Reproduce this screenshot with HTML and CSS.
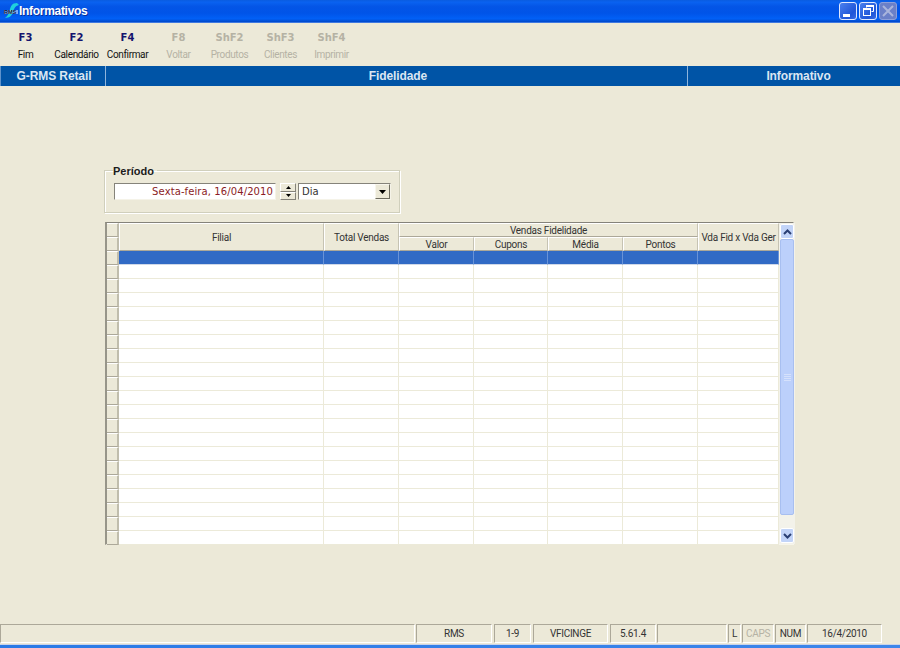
FILE: index.html
```html
<!DOCTYPE html>
<html lang="pt">
<head>
<meta charset="utf-8">
<title>Informativos</title>
<link rel="stylesheet" href="styles.css">
</head>
<body>
<div class="window">
  <header class="titlebar">
    <svg class="appicon" width="16" height="16" viewBox="0 0 16 16"><path d="M14 0 C9 0 8 3 7 6 C6 10 5 13 2 15 C7 15 9 12 10 9 C11 6 12 3 16 2 Z" fill="#1fd0dc"/><rect x="1" y="7" width="14" height="4" fill="#e8f0ff" opacity=".55"/><text x="1" y="10.8" class="appicon-text">RMS</text></svg>
    <span class="title">Informativos</span>
    <div class="winbtns">
      <button class="winbtn"><svg width="16" height="16" viewBox="0 0 16 16"><rect x="3" y="11" width="7" height="3" fill="#fff"/></svg></button>
      <button class="winbtn"><svg width="16" height="16" viewBox="0 0 16 16"><path d="M6.5 4.5V2.5h7v6h-2" fill="none" stroke="#fff"/><rect x="3.5" y="5.5" width="7" height="7" fill="none" stroke="#fff"/><rect x="3" y="5" width="8" height="2" fill="#fff"/><rect x="6" y="2" width="8" height="2" fill="#fff"/></svg></button>
      <button class="winbtn winbtn-off"><svg width="16" height="16" viewBox="0 0 16 16"><path d="M3 3l10 10M13 3L3 13" stroke="#aab5dc" stroke-width="2"/></svg></button>
    </div>
  </header>

  <nav class="toolbar">
    <div class="tool"><b>F3</b><span>Fim</span></div>
    <div class="tool"><b>F2</b><span>Calendário</span></div>
    <div class="tool"><b>F4</b><span>Confirmar</span></div>
    <div class="tool off"><b>F8</b><span>Voltar</span></div>
    <div class="tool off"><b>ShF2</b><span>Produtos</span></div>
    <div class="tool off"><b>ShF3</b><span>Clientes</span></div>
    <div class="tool off"><b>ShF4</b><span>Imprimir</span></div>
  </nav>

  <div class="banner">
    <div class="banner-a">G-RMS Retail</div>
    <div class="banner-b">Fidelidade</div>
    <div class="banner-c">Informativo</div>
  </div>

  <main class="content">
    <fieldset class="period">
      <legend>Período</legend>
      <div class="period-row">
        <div class="datefield">Sexta-feira, 16/04/2010</div>
        <div class="spinner">
          <button class="spin"><svg width="5" height="3" viewBox="0 0 5 3"><path d="M2.5 0L5 3H0Z" fill="#000"/></svg></button>
          <button class="spin"><svg width="5" height="3" viewBox="0 0 5 3"><path d="M0 0H5L2.5 3Z" fill="#000"/></svg></button>
        </div>
        <div class="combo">
          <span>Dia</span>
          <button class="combo-btn"><svg width="7" height="4" viewBox="0 0 7 4"><path d="M0 0H7L3.5 4Z" fill="#000"/></svg></button>
        </div>
      </div>
    </fieldset>

    <div class="gridbox">
      <table class="grid">
        <colgroup>
          <col class="c-ind"><col class="c-fil"><col class="c-tot"><col class="c-val"><col class="c-cup"><col class="c-med"><col class="c-pon"><col class="c-vda">
        </colgroup>
        <thead>
          <tr>
            <th class="ind"></th>
            <th rowspan="2">Filial</th>
            <th rowspan="2">Total Vendas</th>
            <th colspan="4">Vendas Fidelidade</th>
            <th rowspan="2" class="nowrap">Vda Fid x Vda Ger</th>
          </tr>
          <tr>
            <th class="ind"></th>
            <th>Valor</th><th>Cupons</th><th>Média</th><th>Pontos</th>
          </tr>
        </thead>
        <tbody>
          <tr class="sel"><th class="ind"></th><td></td><td></td><td></td><td></td><td></td><td></td><td></td></tr>
          <tr><th class="ind"></th><td></td><td></td><td></td><td></td><td></td><td></td><td></td></tr>
          <tr><th class="ind"></th><td></td><td></td><td></td><td></td><td></td><td></td><td></td></tr>
          <tr><th class="ind"></th><td></td><td></td><td></td><td></td><td></td><td></td><td></td></tr>
          <tr><th class="ind"></th><td></td><td></td><td></td><td></td><td></td><td></td><td></td></tr>
          <tr><th class="ind"></th><td></td><td></td><td></td><td></td><td></td><td></td><td></td></tr>
          <tr><th class="ind"></th><td></td><td></td><td></td><td></td><td></td><td></td><td></td></tr>
          <tr><th class="ind"></th><td></td><td></td><td></td><td></td><td></td><td></td><td></td></tr>
          <tr><th class="ind"></th><td></td><td></td><td></td><td></td><td></td><td></td><td></td></tr>
          <tr><th class="ind"></th><td></td><td></td><td></td><td></td><td></td><td></td><td></td></tr>
          <tr><th class="ind"></th><td></td><td></td><td></td><td></td><td></td><td></td><td></td></tr>
          <tr><th class="ind"></th><td></td><td></td><td></td><td></td><td></td><td></td><td></td></tr>
          <tr><th class="ind"></th><td></td><td></td><td></td><td></td><td></td><td></td><td></td></tr>
          <tr><th class="ind"></th><td></td><td></td><td></td><td></td><td></td><td></td><td></td></tr>
          <tr><th class="ind"></th><td></td><td></td><td></td><td></td><td></td><td></td><td></td></tr>
          <tr><th class="ind"></th><td></td><td></td><td></td><td></td><td></td><td></td><td></td></tr>
          <tr><th class="ind"></th><td></td><td></td><td></td><td></td><td></td><td></td><td></td></tr>
          <tr><th class="ind"></th><td></td><td></td><td></td><td></td><td></td><td></td><td></td></tr>
          <tr><th class="ind"></th><td></td><td></td><td></td><td></td><td></td><td></td><td></td></tr>
          <tr><th class="ind"></th><td></td><td></td><td></td><td></td><td></td><td></td><td></td></tr>
          <tr><th class="ind"></th><td></td><td></td><td></td><td></td><td></td><td></td><td></td></tr>
        </tbody>
      </table>
      <div class="scrollbar">
        <button class="sb-btn"><svg width="9" height="6" viewBox="0 0 9 6"><path d="M1 5L4.5 1.5L8 5" fill="none" stroke="#2a3f73" stroke-width="2"/></svg></button>
        <div class="sb-thumb"><svg width="7" height="7" viewBox="0 0 7 7"><path d="M0 .5h7M0 2.5h7M0 4.5h7M0 6.5h7" stroke="#d5e1fc" stroke-width="1"/></svg></div>
        <div class="sb-track"></div>
        <button class="sb-btn"><svg width="9" height="6" viewBox="0 0 9 6"><path d="M1 1L4.5 4.5L8 1" fill="none" stroke="#2a3f73" stroke-width="2"/></svg></button>
      </div>
    </div>
  </main>

  <footer class="statusbar">
    <div class="panel p-main"></div>
    <div class="panel p-rms">RMS</div>
    <div class="panel p-page">1-9</div>
    <div class="panel p-user">VFICINGE</div>
    <div class="panel p-ver">5.61.4</div>
    <div class="panel p-blank"></div>
    <div class="panel p-l">L</div>
    <div class="panel p-caps off">CAPS</div>
    <div class="panel p-num">NUM</div>
    <div class="panel p-date">16/4/2010</div>
  </footer>
  <div class="taskstrip"></div>
</div>
</body>
</html>
```
FILE: styles.css
```css
* { box-sizing: border-box; }
html, body { margin: 0; padding: 0; }
body { width: 900px; height: 648px; overflow: hidden; background: #ece9d8; font-family: Roboto, "Liberation Sans", Arial, sans-serif; color: #000; }
button { padding: 0; margin: 0; display: flex; align-items: center; justify-content: center; }

.window { width: 900px; height: 648px; display: flex; flex-direction: column; }

/* Title bar */
.titlebar { height: 23px; flex: none; display: flex; align-items: center; padding: 0 3px 1px 3px; color: #fff; border-bottom: 1px solid #3f78e0;
  background: linear-gradient(180deg, #0a5ce0 0%, #0a62f0 10%, #0455e6 30%, #0054e8 60%, #0160f6 85%, #0047c8 100%); }
.appicon { flex: none; }
.appicon-text { font: bold 5.5px "Liberation Sans", sans-serif; fill: #08143c; }
.title { font: bold 12px "Liberation Sans", Arial, sans-serif; letter-spacing: -.3px; text-shadow: 1px 1px 0 #0a2f9a; }
.winbtns { margin-left: auto; display: flex; gap: 2px; }
.winbtn { width: 18px; height: 18px; border: 1px solid #dfe8ff; border-radius: 3px; background: linear-gradient(135deg, #4a80ee, #1f55d8 70%, #3a6ce4); }
.winbtn-off { background: #6b80c8; border-color: #8e9fd8; }

/* Toolbar */
.toolbar { height: 43px; flex: none; display: flex; padding-top: 8px; }
.tool { width: 51px; display: flex; flex-direction: column; align-items: center; color: #111; font-size: 10px; }
.tool b { font: bold 10px "DejaVu Sans", sans-serif; color: #14146e; line-height: 14px; }
.tool span { line-height: 14px; margin-top: 3px; white-space: nowrap; letter-spacing: -.35px; }
.tool.off b { color: #b5b2a4; }
.tool.off span { color: #b5b2a4; }

/* Banner */
.banner { height: 20px; flex: none; display: flex; background: #0054a6; color: #dbe6f2; font: bold 12px/20px "Liberation Sans", Arial, sans-serif; letter-spacing: -.1px; text-align: center; }
.banner-a { width: 106px; padding-left: 2px; border-left: 1px solid #5e93cc; border-right: 1px solid #8fb5dc; }
.banner-b { width: 581px; padding-left: 3px; }
.banner-c { flex: 1; padding-left: 9px; border-left: 1px solid #8fb5dc; }

/* Content */
.content { flex: 1; padding: 77px 0 0 104px; min-height: 0; }
.period { width: 295px; height: 50px; margin: 0; padding: 0 8px 0 9px; border: 1px solid #d0cfbc; box-shadow: 1px 1px 0 #fff, inset 1px 1px 0 #fff; border-radius: 0; }
.period legend { padding: 2px 3px 0 0; margin-left: -1px; font: bold 11px/13px "Liberation Sans", Arial, sans-serif; color: #1c1c1c; }
.period-row { display: flex; height: 17px; margin-top: 5px; }
.datefield { width: 162px; height: 17px; background: #fff; border-top: 1px solid #85837a; border-left: 1px solid #85837a; border-right: 1px solid #f5f3e8; border-bottom: 1px solid #f5f3e8; color: #8b1c24; font: 10px/15px "DejaVu Sans", sans-serif; text-align: right; padding-right: 2px; letter-spacing: .1px; }
.spinner { width: 16px; margin-left: 4px; display: flex; flex-direction: column; }
.spin { width: 16px; height: 9px; flex: 1; background: #ece9d8; border: 1px solid; border-color: #fff #85837a #85837a #fff; }
.combo { width: 93px; margin-left: 2px; display: flex; align-items: center; background: #fff; border-top: 1px solid #85837a; border-left: 1px solid #85837a; border-right: 1px solid #f5f3e8; border-bottom: 1px solid #f5f3e8; font: 10px "DejaVu Sans", sans-serif; padding-left: 3px; color: #333; }
.combo-btn { margin-left: auto; width: 15px; height: 15px; background: #ece9d8; border: 1px solid; border-color: #f8f6ec #6e6c60 #6e6c60 #f8f6ec; }

/* Grid */
.gridbox { margin: 9px 0 0 1px; width: 689px; height: 323px; display: flex; border-top: 1px solid #85837a; border-left: 2px solid #979589; border-right: 1px solid #f7f5ea; border-bottom: 1px solid #f7f5ea; background: #fff; }
.grid { width: 671px; flex: none; table-layout: fixed; border-collapse: separate; border-spacing: 0; font-size: 10px; letter-spacing: -.25px; height: 321px; }
.c-ind { width: 12px; }
.c-fil { width: 205px; }
.c-tot { width: 75px; }
.c-val { width: 75px; }
.c-cup { width: 74px; }
.c-med { width: 75px; }
.c-pon { width: 75px; }
.c-vda { width: 81px; }
.grid tr { height: 14px; }
.grid th { padding: 1px 0 0; background: #ece9d8; font-weight: normal; color: #333; border-top: 1px solid #fff; border-left: 1px solid #fff; border-right: 1px solid #c6c3b3; border-bottom: 1px solid #aca899; overflow: hidden; line-height: 11px; }
.grid th.nowrap { white-space: nowrap; }
.grid th.ind { border-right: 2px solid #c0bdac; border-left: 0; }
.grid td { padding: 0; border-right: 1px solid #ecead9; border-bottom: 1px solid #ecead9; background: #fff; }
.grid tr.sel td { background: #316ac5; border-right-color: #6a93d6; border-bottom-color: #cfd8e8; }

/* Scrollbar */
.scrollbar { flex: 1; display: flex; flex-direction: column; padding: 1px; background: #f3f2ea; }
.sb-btn { height: 15px; flex: none; width: 14px; border: 1px solid #fff; border-radius: 2px; background: #c2d4f8; }
.sb-thumb { height: 276px; flex: none; width: 14px; background: #bcd0fb; border: 1px solid #a8bff0; border-radius: 2px; display: flex; align-items: center; justify-content: center; }
.sb-track { flex: 1; }

/* Status bar */
.statusbar { margin-top: auto; height: 21px; flex: none; display: flex; font-size: 10px; letter-spacing: -.3px; color: #333; border-bottom: 1px solid #c9d4ea; }
.panel { height: 19px; margin-right: 2px; flex: none; border: 1px solid; border-color: #aca899 #fff #fff #aca899; text-align: center; line-height: 17px; white-space: nowrap; }
.p-main { width: 415px; margin-right: 1px; }
.p-rms { width: 76px; margin-right: 2px; }
.p-page { width: 37px; margin-right: 2px; }
.p-user { width: 75px; margin-right: 2px; }
.p-ver { width: 46px; margin-right: 1px; }
.p-blank { width: 70px; margin-right: 1px; }
.p-l { width: 13px; margin-right: 1px; }
.p-caps { width: 32px; margin-right: 1px; }
.p-num { width: 31px; margin-right: 1px; }
.p-date { width: 75px; }
.off { color: #b5b2a4; }
.taskstrip { height: 3px; flex: none; background: linear-gradient(90deg, #2a7ae6, #3d86ea); }
```
